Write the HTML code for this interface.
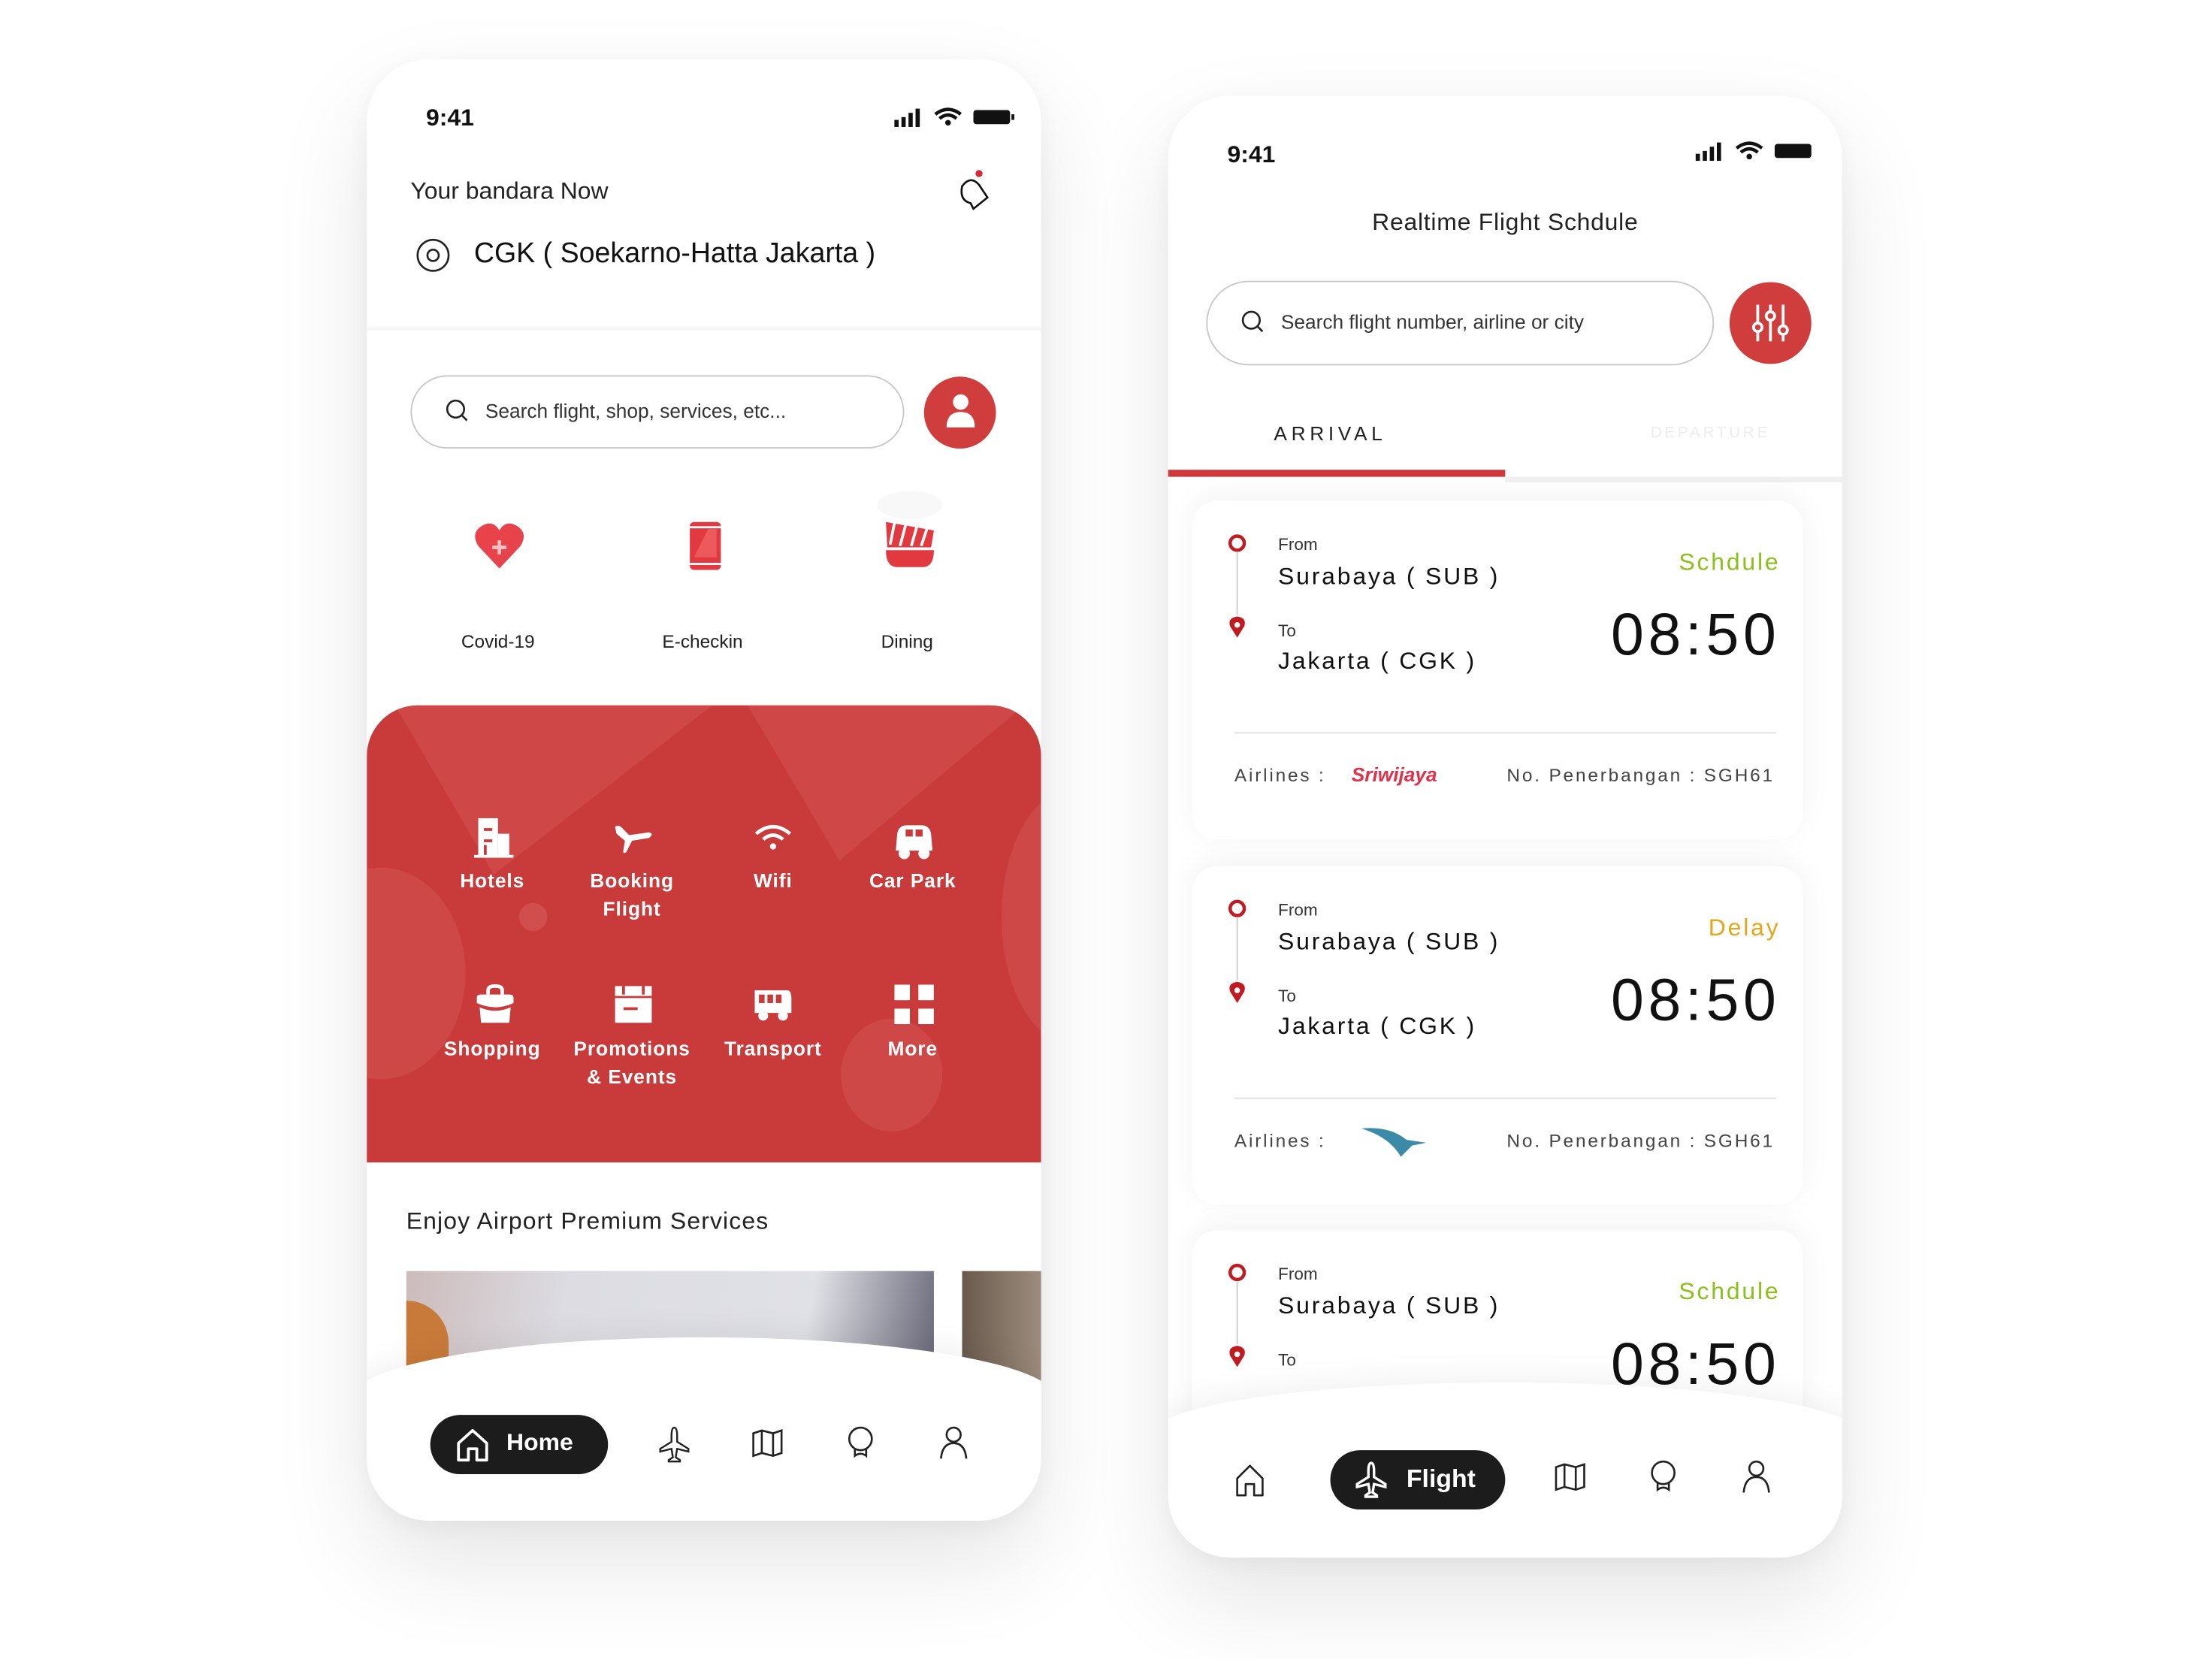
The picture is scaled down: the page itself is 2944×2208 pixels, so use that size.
<!DOCTYPE html>
<html><head><meta charset="utf-8">
<style>
html,body{margin:0;padding:0;background:#fff;width:2944px;height:2208px;overflow:hidden}
#s{position:absolute;left:0;top:0;width:1568px;height:1176px;transform:scale(1.87755);transform-origin:0 0;font-family:"Liberation Sans",sans-serif;color:#111}
.a{position:absolute}
.ph{position:absolute;background:#fff;border-radius:44px;overflow:hidden;box-shadow:0 30px 80px rgba(0,0,0,.10),0 4px 20px rgba(0,0,0,.05)}
.t{position:absolute;white-space:nowrap}
.lbl{color:#fff;font-size:14px;font-weight:bold;text-align:center;width:100px;line-height:20px;letter-spacing:.5px}
.g{position:absolute;width:100px;text-align:center}
.card{position:absolute;left:17px;width:433px;background:#fff;border-radius:18px;box-shadow:0 -4px 20px rgba(0,0,0,.05)}
</style></head><body><div id="s">

<!-- LEFT PHONE -->
<div class="ph" style="left:260px;top:42px;width:478px;height:1036px">
 <div class="t" style="left:42px;top:32px;font-size:17px;font-weight:bold">9:41</div>
 <svg class="a" style="left:372px;top:33px" width="90" height="16" viewBox="0 0 90 16">
  <rect x="2" y="10" width="3" height="5" fill="#111"/><rect x="7" y="8" width="3" height="7" fill="#111"/><rect x="12" y="5" width="3" height="10" fill="#111"/><rect x="17" y="2" width="3" height="13" fill="#111"/>
  <path d="M31 6 Q40 -1 49 6" stroke="#111" stroke-width="2.4" fill="none"/><path d="M34 9 Q40 4 46 9" stroke="#111" stroke-width="2.4" fill="none"/><circle cx="40" cy="12" r="2" fill="#111"/>
  <rect x="58" y="3" width="26" height="10" rx="2" fill="#111"/><rect x="85" y="6" width="2" height="4" fill="#111"/>
 </svg>
 <div class="t" style="left:31px;top:84px;font-size:17px;color:#222">Your bandara Now</div>
 <svg class="a" style="left:416px;top:78px" width="30" height="34" viewBox="0 0 30 34"><circle cx="18" cy="3" r="2.5" fill="#d42a3a"/><path d="M6 12 Q12 4 18 11 L24 20 L14 28 L12 24 Q4 22 6 12Z" stroke="#111" stroke-width="1.4" fill="none"/></svg>
 <svg class="a" style="left:34px;top:126px" width="26" height="26" viewBox="0 0 26 26"><circle cx="13" cy="13" r="11" stroke="#222" stroke-width="1.4" fill="none"/><circle cx="13" cy="13" r="4" stroke="#222" stroke-width="1.4" fill="none"/></svg>
 <div class="t" style="left:76px;top:127px;font-size:20px;color:#111">CGK ( Soekarno-Hatta Jakarta )</div>
 <div class="a" style="left:0;top:188px;width:478px;height:4px;background:linear-gradient(#fff,#f3f3f3)"></div>
 <div class="a" style="left:31px;top:224px;width:348px;height:50px;border:1px solid #c8c8c8;border-radius:26px"></div>
 <svg class="a" style="left:55px;top:240px" width="18" height="18" viewBox="0 0 18 18"><circle cx="8" cy="8" r="6" stroke="#222" stroke-width="1.4" fill="none"/><path d="M12 12 L16 16" stroke="#222" stroke-width="1.4"/></svg>
 <div class="t" style="left:84px;top:241px;font-size:14px;color:#333">Search flight, shop, services, etc...</div>
 <div class="a" style="left:395px;top:225px;width:51px;height:51px;border-radius:50%;background:#cf3d3d"></div>
 <svg class="a" style="left:408px;top:236px" width="26" height="28" viewBox="0 0 26 28"><circle cx="13" cy="7" r="5.5" fill="#fff"/><path d="M3 25 Q3 14 13 14 Q23 14 23 25Z" fill="#fff"/></svg>
 <svg class="a" style="left:75px;top:327px" width="38" height="36" viewBox="0 0 38 36"><path d="M19 34 L4 18 Q-2 8 8 3 Q15 0 19 7 Q23 0 30 3 Q40 8 34 18Z" fill="#e8434a"/><path d="M19 14 v10 M14 19 h10" stroke="#f8c0c0" stroke-width="2.5"/></svg>
 <svg class="a" style="left:228px;top:327px" width="24" height="36" viewBox="0 0 24 36"><rect x="1" y="1" width="22" height="34" rx="3" fill="#e2383f"/><rect x="1" y="4" width="22" height="1.5" fill="#fff"/><rect x="1" y="30" width="22" height="1.5" fill="#fff"/><path d="M4 26 L14 6 L20 6 L20 26Z" fill="#ec5a5e"/></svg>
 <div class="a" style="left:362px;top:306px;width:46px;height:20px;border-radius:50%;background:#f8f8f8"></div>
 <svg class="a" style="left:366px;top:326px" width="38" height="36" viewBox="0 0 38 36"><path d="M2 2 L36 8 L34 20 L3 20Z" fill="#e2383f"/><path d="M8 3 L5 18 M16 4 L12 19 M24 5 L20 19 M31 7 L27 19" stroke="#fff" stroke-width="2"/><path d="M2 22 L36 22 Q36 34 28 34 L10 34 Q2 34 2 22Z" fill="#e2383f"/></svg>
 <div class="g" style="left:43px;top:405px;font-size:13px;color:#222">Covid-19</div>
 <div class="g" style="left:188px;top:405px;font-size:13px;color:#222">E-checkin</div>
 <div class="g" style="left:333px;top:405px;font-size:13px;color:#222">Dining</div>
 <div class="a" style="left:0;top:458px;width:478px;height:324px;background:#c93a3a;border-radius:36px 36px 0 0;overflow:hidden">
  <svg class="a" style="left:0;top:0" width="478" height="324"><path d="M20 0 L90 120 L245 0Z" fill="#d14d4d" opacity=".7"/><path d="M270 0 L335 110 L478 -10Z" fill="#d14d4d" opacity=".7"/><ellipse cx="10" cy="190" rx="60" ry="75" fill="#d04f4f" opacity=".7"/><ellipse cx="372" cy="262" rx="36" ry="40" fill="#d04f4f" opacity=".7"/><ellipse cx="118" cy="150" rx="10" ry="10" fill="#d35454" opacity=".8"/><ellipse cx="500" cy="150" rx="50" ry="90" fill="#d04f4f" opacity=".7"/></svg>
 </div>
 <svg class="a" style="left:76px;top:537px" width="28" height="30" viewBox="0 0 28 30"><rect x="3" y="1" width="14" height="28" fill="#fff"/><rect x="17" y="12" width="8" height="17" fill="#fff"/><rect x="0" y="27" width="28" height="2" fill="#fff"/><rect x="7" y="8" width="6" height="2" fill="#c93a3a"/><rect x="7" y="16" width="6" height="2" fill="#c93a3a"/><rect x="7" y="20" width="2" height="7" fill="#c93a3a"/></svg>
 <svg class="a" style="left:174px;top:540px" width="30" height="26" viewBox="0 0 30 26"><path d="M2 4 Q5 2 8 6 L12 10 L26 8 Q30 9 26 12 L14 14 L10 22 Q7 24 8 20 L9 14 L3 9Z" fill="#fff"/></svg>
 <svg class="a" style="left:274px;top:541px" width="28" height="22" viewBox="0 0 28 22"><path d="M2 8 Q14 -2 26 8" stroke="#fff" stroke-width="2.5" fill="none"/><path d="M7 12 Q14 6 21 12" stroke="#fff" stroke-width="2.5" fill="none"/><circle cx="14" cy="17" r="2.2" fill="#fff"/></svg>
 <svg class="a" style="left:373px;top:541px" width="30" height="28" viewBox="0 0 30 28"><path d="M3 8 Q4 2 10 2 L20 2 Q26 2 27 8 L28 20 L2 20Z" fill="#fff"/><circle cx="8" cy="22" r="4" fill="#fff"/><circle cx="22" cy="22" r="4" fill="#fff"/><rect x="9" y="5" width="5" height="5" fill="#c93a3a"/><rect x="16" y="5" width="5" height="5" fill="#c93a3a"/></svg>
 <svg class="a" style="left:76px;top:655px" width="30" height="30" viewBox="0 0 30 30"><path d="M10 8 V5 Q10 2 15 2 Q20 2 20 5 V8" stroke="#fff" stroke-width="2.5" fill="none"/><path d="M2 10 Q2 8 5 8 L25 8 Q28 8 28 10 L28 14 Q15 20 2 14Z" fill="#fff"/><path d="M4 17 Q15 22 26 17 L25 28 L5 28Z" fill="#fff"/></svg>
 <svg class="a" style="left:175px;top:656px" width="28" height="28" viewBox="0 0 28 28"><rect x="1" y="1" width="26" height="26" fill="#fff"/><rect x="6" y="1" width="2" height="6" fill="#c93a3a"/><rect x="20" y="1" width="2" height="6" fill="#c93a3a"/><rect x="1" y="8" width="26" height="1.5" fill="#c93a3a"/><rect x="7" y="16" width="10" height="2" fill="#c93a3a"/></svg>
 <svg class="a" style="left:274px;top:658px" width="28" height="26" viewBox="0 0 28 26"><path d="M1 2 L24 2 Q27 2 27 8 L27 18 L1 18Z" fill="#fff"/><rect x="4" y="5" width="4" height="6" fill="#c93a3a"/><rect x="10" y="5" width="4" height="6" fill="#c93a3a"/><rect x="16" y="5" width="4" height="6" fill="#c93a3a"/><circle cx="7" cy="20" r="3.5" fill="#fff"/><circle cx="21" cy="20" r="3.5" fill="#fff"/></svg>
 <svg class="a" style="left:374px;top:656px" width="28" height="28" viewBox="0 0 28 28"><rect x="0" y="0" width="11" height="11" fill="#fff"/><rect x="17" y="0" width="11" height="11" fill="#fff"/><rect x="0" y="17" width="11" height="11" fill="#fff"/><rect x="17" y="17" width="11" height="11" fill="#fff"/></svg>
 <div class="t lbl" style="left:39px;top:572px">Hotels</div>
 <div class="t lbl" style="left:138px;top:572px">Booking<br>Flight</div>
 <div class="t lbl" style="left:238px;top:572px">Wifi</div>
 <div class="t lbl" style="left:337px;top:572px">Car Park</div>
 <div class="t lbl" style="left:39px;top:691px">Shopping</div>
 <div class="t lbl" style="left:138px;top:691px">Promotions<br>&amp; Events</div>
 <div class="t lbl" style="left:238px;top:691px">Transport</div>
 <div class="t lbl" style="left:337px;top:691px">More</div>
 <div class="t" style="left:28px;top:814px;font-size:17px;color:#222;letter-spacing:.6px">Enjoy Airport Premium Services</div>
 <div class="a" style="left:28px;top:859px;width:374px;height:80px;background:linear-gradient(100deg,#cbb 0%,#dcdce2 30%,#e0e1e6 75%,#667 100%)"></div>
 <div class="a" style="left:28px;top:880px;width:30px;height:60px;background:#c87a3a;border-radius:0 30px 0 0"></div>
 <div class="a" style="left:422px;top:859px;width:60px;height:80px;background:linear-gradient(90deg,#6a5a4e,#a09080)"></div>
 <div class="a" style="left:-10px;top:906px;width:498px;height:160px;background:#fff;border-radius:70% 70% 0 0 / 60px 60px 0 0;box-shadow:0 -6px 20px rgba(0,0,0,.05)"></div>
 <div class="a" style="left:45px;top:961px;width:126px;height:42px;border-radius:21px;background:#1c1c1c"></div>
 <svg class="a" style="left:62px;top:969px" width="26" height="26" viewBox="0 0 26 26"><path d="M3 12 L13 3 L23 12 L23 24 L16 24 L16 16 L10 16 L10 24 L3 24Z" stroke="#fff" stroke-width="2" fill="none" stroke-linejoin="round"/></svg>
 <div class="t" style="left:99px;top:971px;font-size:17px;font-weight:bold;color:#fff">Home</div>
 <svg class="a" style="left:206px;top:968px" width="24" height="28" viewBox="0 0 24 28"><path d="M12 2 Q14 2 14 8 L14 12 L22 17 L22 19 L14 17 L13 23 L16 25 L16 26 L8 26 L8 25 L11 23 L10 17 L2 19 L2 17 L10 12 L10 8 Q10 2 12 2Z" stroke="#222" stroke-width="1.3" fill="none"/></svg>
 <svg class="a" style="left:272px;top:970px" width="24" height="22" viewBox="0 0 24 22"><path d="M2 4 L8 2 L16 4 L22 2 L22 18 L16 20 L8 18 L2 20Z M8 2 V18 M16 4 V20" stroke="#222" stroke-width="1.4" fill="none"/></svg>
 <svg class="a" style="left:338px;top:968px" width="24" height="26" viewBox="0 0 24 26"><circle cx="12" cy="10" r="8" stroke="#222" stroke-width="1.4" fill="none"/><path d="M8 17 L8 22 Q12 19 16 22 L16 17" stroke="#222" stroke-width="1.4" fill="none"/></svg>
 <svg class="a" style="left:404px;top:968px" width="24" height="26" viewBox="0 0 24 26"><circle cx="12" cy="7" r="5" stroke="#222" stroke-width="1.4" fill="none"/><path d="M3 24 Q4 13 12 13 Q20 13 21 24" stroke="#222" stroke-width="1.4" fill="none"/></svg>
</div>

<!-- RIGHT PHONE -->
<div class="ph" style="left:828px;top:68px;width:478px;height:1036px">
 <div class="t" style="left:42px;top:32px;font-size:17px;font-weight:bold">9:41</div>
 <svg class="a" style="left:372px;top:31px" width="90" height="16" viewBox="0 0 90 16">
  <rect x="2" y="10" width="3" height="5" fill="#111"/><rect x="7" y="8" width="3" height="7" fill="#111"/><rect x="12" y="5" width="3" height="10" fill="#111"/><rect x="17" y="2" width="3" height="13" fill="#111"/>
  <path d="M31 6 Q40 -1 49 6" stroke="#111" stroke-width="2.4" fill="none"/><path d="M34 9 Q40 4 46 9" stroke="#111" stroke-width="2.4" fill="none"/><circle cx="40" cy="12" r="2" fill="#111"/>
  <rect x="58" y="3" width="26" height="10" rx="2" fill="#111"/>
 </svg>
 <div class="t" style="left:0;width:478px;text-align:center;top:80px;font-size:17px;color:#222;letter-spacing:.4px">Realtime Flight Schdule</div>
 <div class="a" style="left:27px;top:131px;width:358px;height:58px;border:1px solid #c8c8c8;border-radius:30px"></div>
 <svg class="a" style="left:51px;top:151px" width="18" height="18" viewBox="0 0 18 18"><circle cx="8" cy="8" r="6" stroke="#222" stroke-width="1.4" fill="none"/><path d="M12 12 L16 16" stroke="#222" stroke-width="1.4"/></svg>
 <div class="t" style="left:80px;top:152px;font-size:14px;color:#333">Search flight number, airline or city</div>
 <div class="a" style="left:398px;top:132px;width:58px;height:58px;border-radius:50%;background:#cf3d3d"></div>
 <svg class="a" style="left:411px;top:146px" width="32" height="30" viewBox="0 0 32 30"><path d="M7 2 V28 M16 2 V28 M25 2 V28" stroke="#fff" stroke-width="2"/><circle cx="7" cy="18" r="3" fill="#cf3d3d" stroke="#fff" stroke-width="2"/><circle cx="16" cy="10" r="3" fill="#cf3d3d" stroke="#fff" stroke-width="2"/><circle cx="25" cy="20" r="3" fill="#cf3d3d" stroke="#fff" stroke-width="2"/></svg>
 <div class="t" style="left:75px;top:231px;font-size:14px;letter-spacing:3px;color:#222">ARRIVAL</div>
 <div class="t" style="left:342px;top:233px;font-size:11px;letter-spacing:2px;color:#ececec">DEPARTURE</div>
 <div class="a" style="left:0;top:265px;width:239px;height:5px;background:#d0393c"></div>
 <div class="a" style="left:239px;top:270px;width:239px;height:4px;background:#f0f0f0"></div>

 <div class="card" style="top:287px;height:240px">
  <svg class="a" style="left:25px;top:23px" width="14" height="75" viewBox="0 0 14 75"><circle cx="7" cy="7" r="5" stroke="#c11b22" stroke-width="2.4" fill="none"/><path d="M7 13 V58" stroke="#ccc"/><path d="M7 74 L2 66 Q0 60 7 59 Q14 60 12 66Z" fill="#c11b22"/><circle cx="7" cy="65" r="2" fill="#fff"/></svg>
  <div class="t" style="left:61px;top:24px;font-size:12px;color:#333">From</div>
  <div class="t" style="left:61px;top:44px;font-size:17px;letter-spacing:1.5px">Surabaya ( SUB )</div>
  <div class="t" style="left:61px;top:85px;font-size:12px;color:#333">To</div>
  <div class="t" style="left:61px;top:104px;font-size:17px;letter-spacing:1.5px">Jakarta ( CGK )</div>
  <div class="t" style="right:16px;top:34px;font-size:17px;letter-spacing:1.5px;color:#8cbf1a">Schdule</div>
  <div class="t" style="right:16px;top:71px;font-size:42px;letter-spacing:3px">08:50</div>
  <div class="a" style="left:30px;top:164px;width:384px;height:1px;background:#e0e0e0"></div>
  <div class="t" style="left:30px;top:187px;font-size:13px;color:#444;letter-spacing:1.5px">Airlines :</div>
  <div class="t" style="left:113px;top:186px;font-size:14px;font-style:italic;font-weight:bold;color:#e0304a">Sriwijaya</div>
  <div class="t" style="right:20px;top:187px;font-size:13px;color:#444;letter-spacing:1.5px">No. Penerbangan : SGH61</div>
 </div>
 <div class="card" style="top:546px;height:240px">
  <svg class="a" style="left:25px;top:23px" width="14" height="75" viewBox="0 0 14 75"><circle cx="7" cy="7" r="5" stroke="#c11b22" stroke-width="2.4" fill="none"/><path d="M7 13 V58" stroke="#ccc"/><path d="M7 74 L2 66 Q0 60 7 59 Q14 60 12 66Z" fill="#c11b22"/><circle cx="7" cy="65" r="2" fill="#fff"/></svg>
  <div class="t" style="left:61px;top:24px;font-size:12px;color:#333">From</div>
  <div class="t" style="left:61px;top:44px;font-size:17px;letter-spacing:1.5px">Surabaya ( SUB )</div>
  <div class="t" style="left:61px;top:85px;font-size:12px;color:#333">To</div>
  <div class="t" style="left:61px;top:104px;font-size:17px;letter-spacing:1.5px">Jakarta ( CGK )</div>
  <div class="t" style="right:16px;top:34px;font-size:17px;letter-spacing:1.5px;color:#e8a51a">Delay</div>
  <div class="t" style="right:16px;top:71px;font-size:42px;letter-spacing:3px">08:50</div>
  <div class="a" style="left:30px;top:164px;width:384px;height:1px;background:#e0e0e0"></div>
  <div class="t" style="left:30px;top:187px;font-size:13px;color:#444;letter-spacing:1.5px">Airlines :</div>
  <svg class="a" style="left:120px;top:184px" width="48" height="24" viewBox="0 0 48 24"><path d="M0 2 Q20 0 32 10 L46 12 L36 14 L28 22 Q20 8 0 2Z" fill="#3a8aa8"/></svg>
  <div class="t" style="right:20px;top:187px;font-size:13px;color:#444;letter-spacing:1.5px">No. Penerbangan : SGH61</div>
 </div>
 <div class="card" style="top:804px;height:200px">
  <svg class="a" style="left:25px;top:23px" width="14" height="75" viewBox="0 0 14 75"><circle cx="7" cy="7" r="5" stroke="#c11b22" stroke-width="2.4" fill="none"/><path d="M7 13 V58" stroke="#ccc"/><path d="M7 74 L2 66 Q0 60 7 59 Q14 60 12 66Z" fill="#c11b22"/><circle cx="7" cy="65" r="2" fill="#fff"/></svg>
  <div class="t" style="left:61px;top:24px;font-size:12px;color:#333">From</div>
  <div class="t" style="left:61px;top:44px;font-size:17px;letter-spacing:1.5px">Surabaya ( SUB )</div>
  <div class="t" style="left:61px;top:85px;font-size:12px;color:#333">To</div>
  <div class="t" style="right:16px;top:34px;font-size:17px;letter-spacing:1.5px;color:#8cbf1a">Schdule</div>
  <div class="t" style="right:16px;top:71px;font-size:42px;letter-spacing:3px">08:50</div>
 </div>
 <div class="a" style="left:-10px;top:912px;width:498px;height:140px;background:#fff;border-radius:70% 70% 0 0 / 50px 50px 0 0;box-shadow:0 -6px 20px rgba(0,0,0,.05)"></div>
 <svg class="a" style="left:46px;top:968px" width="24" height="26" viewBox="0 0 24 26"><path d="M3 12 L12 3 L21 12 L21 24 L15 24 L15 16 L9 16 L9 24 L3 24Z" stroke="#222" stroke-width="1.4" fill="none" stroke-linejoin="round"/></svg>
 <div class="a" style="left:115px;top:960px;width:124px;height:42px;border-radius:21px;background:#1c1c1c"></div>
 <svg class="a" style="left:131px;top:967px" width="26" height="28" viewBox="0 0 24 28"><path d="M12 2 Q14 2 14 8 L14 12 L22 17 L22 19 L14 17 L13 23 L16 25 L16 26 L8 26 L8 25 L11 23 L10 17 L2 19 L2 17 L10 12 L10 8 Q10 2 12 2Z" stroke="#fff" stroke-width="1.8" fill="none"/></svg>
 <div class="t" style="left:169px;top:970px;font-size:18px;font-weight:bold;color:#fff">Flight</div>
 <svg class="a" style="left:273px;top:968px" width="24" height="22" viewBox="0 0 24 22"><path d="M2 4 L8 2 L16 4 L22 2 L22 18 L16 20 L8 18 L2 20Z M8 2 V18 M16 4 V20" stroke="#222" stroke-width="1.4" fill="none"/></svg>
 <svg class="a" style="left:339px;top:966px" width="24" height="26" viewBox="0 0 24 26"><circle cx="12" cy="10" r="8" stroke="#222" stroke-width="1.4" fill="none"/><path d="M8 17 L8 22 Q12 19 16 22 L16 17" stroke="#222" stroke-width="1.4" fill="none"/></svg>
 <svg class="a" style="left:405px;top:966px" width="24" height="26" viewBox="0 0 24 26"><circle cx="12" cy="7" r="5" stroke="#222" stroke-width="1.4" fill="none"/><path d="M3 24 Q4 13 12 13 Q20 13 21 24" stroke="#222" stroke-width="1.4" fill="none"/></svg>
</div>

</div></body></html>
